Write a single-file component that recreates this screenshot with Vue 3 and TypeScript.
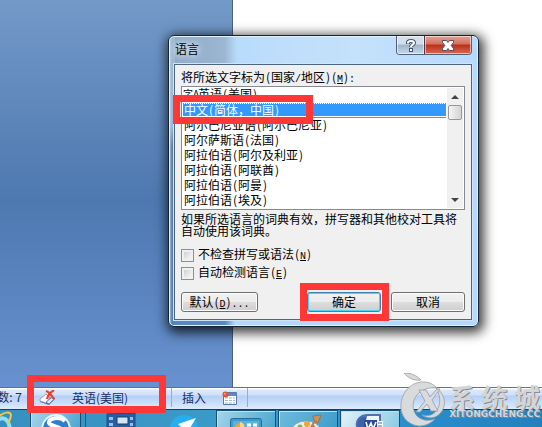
<script setup lang="ts">
import { ref, h, type FunctionalComponent } from 'vue'

// Splits a mixed string so that Latin characters sit on a half-width grid beside the Chinese glyphs.
const Mixed: FunctionalComponent<{ text: string; mnemonic?: string }> = (props) => {
  const runs = props.text.match(/[()]|[^()\x80-\uffff]+|[\x80-\uffff]+/g) ?? []
  return h(
    'span',
    { class: 'mixed' },
    runs.map((run) => {
      if (run === '(' || run === ')') return h('span', { class: 'paren' }, run)
      if (run.charCodeAt(0) > 127) return run
      return h('span', { class: 'half' }, run === props.mnemonic ? [h('u', run)] : run)
    }),
  )
}
Mixed.props = ['text', 'mnemonic']

const languages = [
  '英语(美国)',
  '中文(简体，中国)',
  '阿尔巴尼亚语(阿尔巴尼亚)',
  '阿尔萨斯语(法国)',
  '阿拉伯语(阿尔及利亚)',
  '阿拉伯语(阿联酋)',
  '阿拉伯语(阿曼)',
  '阿拉伯语(埃及)',
]
const selected = ref(1)
const skipCheck = ref(false)
const autoDetect = ref(false)
</script>

<template>
  <div class="screen">
    <main class="workspace">
      <div class="margin"></div>
      <div class="paper"></div>
    </main>

    <footer class="status">
      <span class="words"><span>数: 7</span></span>
      <button class="lang" type="button">
        <svg width="17" height="16" viewBox="0 0 17 16" aria-hidden="true">
          <path d="M1 10l6-4 9 3-6 6-9-3z" fill="#4c6a9c" />
          <path d="M1 9l6-5 4 4-4 5-6-2z" fill="#f7f8fb" stroke="#8a93a8" stroke-width=".8" />
          <path d="M7 12l5-4 4 0-6 6z" fill="#dfe6f2" stroke="#5b79a9" stroke-width=".8" />
          <path d="M7 1c3 1 6 5 8 8M15 0c-3 2-6 5-7 9" fill="none" stroke="#e8432c" stroke-width="2.2" />
        </svg>
        <span>英语(美国)</span>
        <i class="mark"></i>
      </button>
      <button class="insert" type="button">插入</button>
      <button class="macro" type="button" aria-label="宏">
        <svg width="16" height="14" viewBox="0 0 16 14" aria-hidden="true">
          <path d="M1.5 1.5h13v12h-13z" fill="#fff" stroke="#5c78ac" />
          <path d="M2 2h12v3H2z" fill="#5b87d4" />
          <path d="M3 7h10M3 9.500h10M3 12h10" stroke="#a5b6d4" stroke-dasharray="3 1" />
          <circle cx="3.500" cy="3.500" r="3" fill="#e05438" />
          <circle cx="2.800" cy="2.800" r="1" fill="#f6a38e" />
        </svg>
      </button>
    </footer>

    <nav class="taskbar">
      <button class="task ie" type="button" aria-label="浏览器">
        <svg width="30" height="18" viewBox="0 0 30 18" aria-hidden="true">
          <path d="M-5 18C-3 6 7 4 10 18" fill="none" stroke="#8be0fb" stroke-width="4" />
          <path d="M-2 7C4 2 10 1 11 5c0 3-2 6-3 9" fill="none" stroke="#f3c83b" stroke-width="2" />
        </svg>
      </button>
      <button class="task lit sogou" type="button" aria-label="搜狗">
        <svg width="32" height="18" viewBox="0 0 32 18" aria-hidden="true">
          <circle cx="16" cy="18" r="14" fill="#2f7fcb" stroke="#e8f5fc" stroke-width="2" />
          <path d="M25 10C20 5 8 7 9 12c1 3 8 3 12 6" fill="none" stroke="#fff" stroke-width="4" />
        </svg>
      </button>
      <button class="task media" type="button" aria-label="媒体">
        <svg width="30" height="18" viewBox="0 0 30 18" aria-hidden="true">
          <path d="M1 4l28-1v15H1z" fill="#285e9f" stroke="#1e4c82" />
          <path d="M3 7h4v3H3zM3 13h4v3H3zM24 7h3v3h-3zM24 13h3v3h-3z" fill="#8fc4e8" />
          <path d="M11 7h11v7H11z" fill="#d5e5f1" stroke="#123f76" />
        </svg>
      </button>
      <button class="task bird" type="button" aria-label="飞鸟">
        <svg width="30" height="18" viewBox="0 0 30 18" aria-hidden="true">
          <circle cx="15" cy="19" r="14" fill="#27aef1" />
          <path d="M27 8L9 14l4 4h8z" fill="#fff" />
        </svg>
      </button>
      <button class="task lit panel" type="button" aria-label="控制面板">
        <svg width="32" height="18" viewBox="0 0 32 18" aria-hidden="true">
          <rect x=".5" y="7.500" width="31" height="14" rx="2" fill="#3c9cca" stroke="#216e9b" />
          <path d="M3 10h26v8H3z" fill="#5bb2d8" />
          <path d="M5 18a5 5 0 0 1 5-6v6z" fill="#f4a32b" />
          <path d="M10 11a5 5 0 0 1 4 7h-4z" fill="#fbd777" />
          <path d="M17 14h4M23 14h4" stroke="#fff" stroke-width="3" />
        </svg>
      </button>
      <button class="task paint" type="button" aria-label="画图">
        <svg width="32" height="18" viewBox="0 0 32 18" aria-hidden="true">
          <ellipse cx="14" cy="19" rx="14" ry="9" fill="#e7eff2" stroke="#8ba7b4" />
          <circle cx="15" cy="13" r="3" fill="#f3a52f" />
          <circle cx="8" cy="16" r="2.500" fill="#73bd45" />
          <circle cx="21" cy="16" r="2" fill="#e2573f" />
          <path d="M18 18l6-10" stroke="#b98045" stroke-width="2" />
          <path d="M21 5l8-1-3 8-4-3z" fill="#c99360" stroke="#a5703f" />
        </svg>
      </button>
      <button class="task lit word" type="button" aria-label="Word">
        <svg width="32" height="18" viewBox="0 0 32 18" aria-hidden="true">
          <path d="M4 18C0 10 6 4 14 4h12v14z" fill="#f3f7fd" stroke="#5270ae" stroke-width="2" />
          <path d="M4 18C1 10 6 5 13 5l-3 13z" fill="#3d62ad" />
          <path d="M10 9h13v9H10z" fill="#274b98" />
          <path d="M12 11l2 7 3-6 2 6 3-7" fill="none" stroke="#fff" stroke-width="1.600" />
          <path d="M24 10h5v8h-5z" fill="#fff" />
          <path d="M24 12h4M24 15h4" stroke="#4a67a6" />
        </svg>
      </button>
    </nav>

    <section class="dialog" role="dialog" aria-labelledby="dlg-title">
      <header class="titlebar">
        <h1 id="dlg-title">语言</h1>
        <div class="caption">
          <button class="help" type="button" aria-label="帮助">
            <svg width="12" height="13" viewBox="0 0 12 13" aria-hidden="true">
              <path d="M3 5V3.500C3 2 4.500 2 6 2s3 .3 3 2-3 1.700-3 4" fill="none" stroke="#44546a" stroke-width="4" />
              <path d="M4 9h4v4H4z" fill="#44546a" />
              <path d="M3 4.600V3.500C3 2 4.500 2 6 2s3 .3 3 2-3 1.700-3 4" fill="none" stroke="#fff" stroke-width="2" />
              <path d="M5 10h2v2H5z" fill="#fff" />
            </svg>
          </button>
          <button class="close" type="button" aria-label="关闭">
            <svg width="12" height="11" viewBox="0 0 12 11" aria-hidden="true">
              <path d="M.5 .5h4L6 2.500 7.500 .5h4v2l-2.300 3 2.300 3v2h-4L6 8.500l-1.500 2h-4v-2l2.300-3-2.300-3z" fill="#fff" stroke="#55506a" />
            </svg>
          </button>
        </div>
      </header>

      <form class="client" @submit.prevent>
        <label id="lang-label" class="caption-text"><Mixed text="将所选文字标为(国家/地区)(M):" mnemonic="M" /></label>
        <div class="listbox">
          <ul role="listbox" aria-labelledby="lang-label" tabindex="0">
            <li
              v-for="(name, i) in languages"
              :key="name"
              role="option"
              :aria-selected="i === selected"
              :class="{ on: i === selected, recent: i === 0 }"
              @click="selected = i"
            >
              <span v-if="i === 0" class="spell">字A</span>
              <Mixed :text="name" />
              <i v-if="i === selected" class="mark"></i>
            </li>
          </ul>
          <div class="scroll">
            <button type="button" aria-label="向上">
              <svg width="8" height="4" viewBox="0 0 8 4" aria-hidden="true"><path d="M0 4l4-4 4 4z" fill="#444" /></svg>
            </button>
            <div class="thumb"></div>
            <button class="down" type="button" aria-label="向下">
              <svg width="8" height="4" viewBox="0 0 8 4" aria-hidden="true"><path d="M0 0h8L4 4z" fill="#444" /></svg>
            </button>
          </div>
        </div>
        <p>如果所选语言的词典有效，拼写器和其他校对工具将自动使用该词典。</p>
        <div class="checks">
          <label><input v-model="skipCheck" type="checkbox" /><Mixed text="不检查拼写或语法(N)" mnemonic="N" /></label>
          <label><input v-model="autoDetect" type="checkbox" /><Mixed text="自动检测语言(E)" mnemonic="E" /></label>
        </div>
        <div class="actions">
          <button class="btn default" type="button"><Mixed text="默认(D)..." mnemonic="D" /></button>
          <button class="btn ok" type="submit">确定<i class="mark"></i></button>
          <button class="btn" type="button">取消</button>
        </div>
      </form>
    </section>

    <aside class="watermark">
      <svg width="50" height="54" viewBox="0 0 50 54" aria-hidden="true">
        <g fill="#d9dadb" stroke="#989da2" stroke-width=".8">
          <path d="M5 0c7 0 12 2 17 7-7 1-13-2-17-7z" />
          <path d="M38 15C29 5 13 8 6 19-3 34 3 51 20 53c7 0 12-3 16-7-8 3-18 1-21-8-4-12 6-25 23-23z" />
          <path d="M37 15c10 6 12 21 1 28-5 3-11 2-15-1 6 2 13 0 16-7 3-6 2-13-2-20z" />
          <path d="M20 17h7l4 7 7-8h3l-8 11 6 11h-7l-4-7-7 8h-4l9-11z" />
        </g>
      </svg>
      <div class="brand">
        <div class="brand-name"><span>系</span><span>统</span><span>城</span></div>
        <div class="brand-url">XITONGCHENG.CC</div>
      </div>
    </aside>
  </div>
</template>

<style>
body {
  margin: 0;
}
</style>

<style scoped>
.screen {
  position: relative;
  display: flex;
  flex-direction: column;
  min-height: 100vh;
  overflow: hidden;
  font-family: "Noto Sans CJK SC", sans-serif;
  font-size: 12px;
  color: #000;
}
.screen * {
  box-sizing: border-box;
}
button {
  margin: 0;
  padding: 0;
  border: 0;
  background: none;
  font: inherit;
  color: inherit;
}
svg {
  display: block;
  flex: none;
}
.mark {
  position: absolute;
  z-index: 2;
  border: 7px solid #ff3737;
  pointer-events: none;
}

.workspace {
  flex: 1;
  display: flex;
}
.margin {
  width: 43%;
  border-right: 1px solid #50607a;
  background: linear-gradient(#7399c8, #4d78b0 52%, #6792cf);
}
.paper {
  flex: 1;
  background: #fff;
}

.status {
  display: flex;
  align-items: stretch;
  height: 22px;
  padding-bottom: 2px;
  border-top: 1px solid #4878b4;
  background: linear-gradient(#fff 0 1px, #dce9fb 2px, #cfe0f9 7px, #b5cff5 8px, #dcebfe);
  color: #1a2c66;
  line-height: 18px;
}
.words {
  display: flex;
  justify-content: flex-end;
  width: 22px;
  overflow: hidden;
  white-space: nowrap;
}
.lang {
  position: relative;
  display: flex;
  align-items: center;
  gap: 16px;
  width: 150px;
  padding-left: 17px;
  border-right: 1px solid #8eafd9;
}
.lang .mark {
  inset: -13px 5px -6px 5px;
}
.insert {
  padding: 0 10px;
}
.macro {
  display: flex;
  align-items: center;
  padding: 0 9px 0 6px;
  border-right: 1px solid #8eafd9;
}

.taskbar {
  display: flex;
  height: 18px;
  border-top: 1px solid #163e5f;
  background: linear-gradient(to right, #3690c0, #3c9bc9 45%, #2a8fcd 75%, #2380bd);
  overflow: hidden;
}
.task {
  display: flex;
  justify-content: center;
}
.ie {
  width: 30px;
}
.sogou {
  width: 51px;
}
.media {
  width: 71px;
  margin-left: 4px;
  border-left: 1px solid #1b5e88;
}
.bird {
  width: 60px;
  padding-right: 4px;
}
.panel,
.paint,
.word {
  width: 60px;
  margin-right: 2px;
}
.lit,
.paint {
  border: 1px solid #174f77;
  border-bottom: 0;
  box-shadow: inset 1px 1px #b9e3f4;
  background: linear-gradient(120deg, #a5d5e9, #4da7cf);
}
.paint {
  background: linear-gradient(120deg, #6ebbdd, #3e9dca);
}
.word {
  background: linear-gradient(120deg, #e4f3f9, #8ccbe4);
}

.dialog {
  position: absolute;
  left: 168px;
  top: 35px;
  width: 311px;
  padding: 0 6px 6px 5px;
  border: 1px solid #142335;
  border-radius: 6px;
  background:
    linear-gradient(to right, #bcd2e8, transparent 3px) left / 6px 100% no-repeat,
    linear-gradient(#9db7d2, #9db7d2 90px, #587fae 110px, #5380b8) left / 6px 100% no-repeat,
    linear-gradient(to right, #5a87be 56px, #b4d8ff 66px) bottom / 100% 7px no-repeat,
    linear-gradient(to right, #8ba8c8, #9db7d2 56px, #b9dcfc 68px, #c5e1fb 60%, #b6daff);
  box-shadow:
    inset 0 0 0 1px #e3f2ff,
    2px 3px 12px 3px rgba(0, 0, 0, 0.75);
}
.titlebar {
  display: flex;
  justify-content: space-between;
  height: 28px;
}
h1 {
  margin: 0;
  padding-left: 1px;
  font-size: 12px;
  font-weight: 400;
  line-height: 26px;
  text-shadow: 0 0 6px #fff, 0 0 12px #fff;
}
.caption {
  display: flex;
  height: 19px;
  border: 1px solid #526177;
  border-top: 0;
  border-radius: 0 0 4px 4px;
  overflow: hidden;
}
.caption button {
  display: flex;
  align-items: center;
  justify-content: center;
  box-shadow: inset 0 0 0 1px rgba(255, 255, 255, 0.55);
}
.help {
  width: 27px;
  background: linear-gradient(#d2e0ed 45%, #9fb5ca 50%, #c3d9ee);
}
.caption .close {
  width: 47px;
  border-left: 1px solid #5a3340;
  background: linear-gradient(#e4a394, #d3705c 45%, #b9301b 50%, #d9694d);
}

.client {
  padding: 4px 6px 7px;
  border: 1px solid #4c6580;
  background: #f0f0f0;
  box-shadow: 0 0 0 1px #cfe6fa;
}
.mixed {
  white-space: nowrap;
}
.mixed :deep(.half) {
  font-family: "Liberation Mono", monospace;
  font-size: 10px;
}
.mixed :deep(.paren) {
  display: inline-block;
  width: 6px;
  text-align: center;
}
.caption-text {
  display: block;
  height: 17px;
  line-height: 15px;
}
.listbox {
  display: flex;
  border: 1px solid #868b93;
  padding: 1px;
  background: #fff;
}
ul {
  flex: 1;
  margin: 0;
  padding: 0;
  list-style: none;
  outline: 0;
}
li {
  position: relative;
  height: 15px;
  padding-left: 1px;
  line-height: 13px;
}
.recent {
  display: flex;
  padding-left: 0;
  line-height: 11px;
  overflow: hidden;
}
.spell {
  width: 15px;
  font-size: 10px;
  white-space: nowrap;
}
.on {
  padding-left: 0;
  border: 1px dotted #e07b1a;
  background: linear-gradient(#3399ff 12px, #fff 12px 13px, #3399ff 13px);
  color: #fff;
  line-height: 12px;
}
.on .mark {
  left: -11px;
  top: -9px;
  width: 140px;
  height: 29px;
}
.scroll {
  display: flex;
  flex-direction: column;
  width: 16px;
  margin-left: 1px;
  background: #f0f0f1;
}
.scroll button {
  display: flex;
  align-items: center;
  justify-content: center;
  height: 17px;
}
.thumb {
  height: 15px;
  margin: 0 1px;
  border: 1px solid #979797;
  border-radius: 2px;
  background: linear-gradient(to right, #f5f5f5, #d2d3d6);
}
.scroll .down {
  margin-top: auto;
}
p {
  margin: 3px 0 0;
  line-height: 12px;
}
.checks {
  display: flex;
  flex-direction: column;
  gap: 4px;
  margin-top: 11px;
}
.checks label {
  display: flex;
  align-items: center;
  gap: 4px;
  height: 14px;
  line-height: 14px;
}
input {
  appearance: none;
  width: 13px;
  height: 13px;
  margin: 0;
  border: 1px solid #8e8f8f;
  background: linear-gradient(135deg, #cdd3da, #f6f6f6) content-box;
  padding: 2px;
}
.actions {
  display: flex;
  gap: 10px;
  margin-top: 12px;
}
.btn {
  position: relative;
  width: 74px;
  height: 20px;
  border: 1px solid #707070;
  border-radius: 3px;
  background: linear-gradient(#f2f2f2, #ebebeb 50%, #dddddd 50%, #cfcfcf);
  box-shadow: inset 0 0 0 1px #fbfbfb;
  line-height: 18px;
}
.default {
  width: 77px;
  margin-right: auto;
}
.ok {
  border-color: #3c7fb1;
  box-shadow: inset 0 0 0 1px #4fd3f5;
}
.ok .mark {
  inset: -10px -9px -10px -8px;
}

.watermark {
  position: absolute;
  right: 2px;
  bottom: 0;
  display: flex;
  pointer-events: none;
  color: #d3d5d7;
  text-shadow: 1px 1px #858c94;
}
.brand {
  padding-top: 11px;
}
.brand-name {
  display: flex;
  justify-content: space-between;
  font-size: 26px;
  font-weight: 700;
  line-height: 26px;
}
.brand-url {
  font-family: "DejaVu Sans", sans-serif;
  font-size: 9px;
  font-weight: 700;
  line-height: 8px;
}
</style>
